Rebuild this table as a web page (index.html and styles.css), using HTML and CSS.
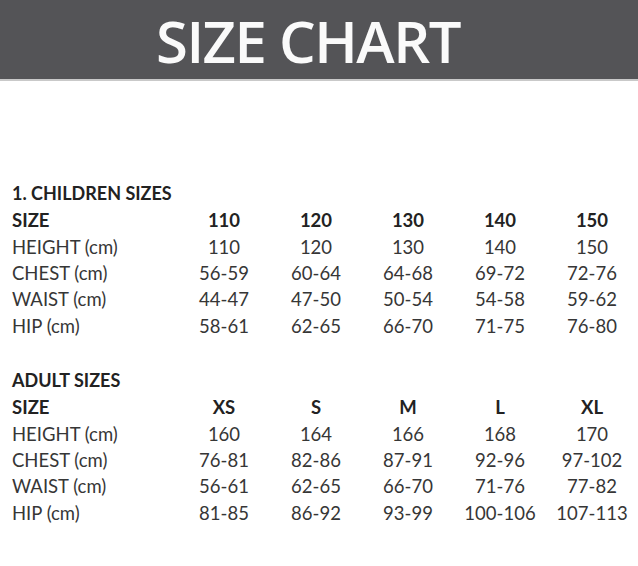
FILE: index.html
```html
<!DOCTYPE html>
<html>
<head>
<meta charset="utf-8">
<link rel="stylesheet" href="styles.css">
</head>
<body>
<header class="banner"><h1 class="title">SIZE CHART</h1></header>
<main class="content">
  <section class="chart">
    <h2 class="chart-title">1. CHILDREN SIZES</h2>
    <div class="grid">
      <div class="label head">SIZE</div><div class="cell head">110</div><div class="cell head">120</div><div class="cell head">130</div><div class="cell head">140</div><div class="cell head">150</div>
      <div class="label">HEIGHT (cm)</div><div class="cell">110</div><div class="cell">120</div><div class="cell">130</div><div class="cell">140</div><div class="cell">150</div>
      <div class="label">CHEST (cm)</div><div class="cell">56-59</div><div class="cell">60-64</div><div class="cell">64-68</div><div class="cell">69-72</div><div class="cell">72-76</div>
      <div class="label">WAIST (cm)</div><div class="cell">44-47</div><div class="cell">47-50</div><div class="cell">50-54</div><div class="cell">54-58</div><div class="cell">59-62</div>
      <div class="label">HIP (cm)</div><div class="cell">58-61</div><div class="cell">62-65</div><div class="cell">66-70</div><div class="cell">71-75</div><div class="cell">76-80</div>
    </div>
  </section>
  <section class="chart">
    <h2 class="chart-title">ADULT SIZES</h2>
    <div class="grid">
      <div class="label head">SIZE</div><div class="cell head">XS</div><div class="cell head">S</div><div class="cell head">M</div><div class="cell head">L</div><div class="cell head">XL</div>
      <div class="label">HEIGHT (cm)</div><div class="cell">160</div><div class="cell">164</div><div class="cell">166</div><div class="cell">168</div><div class="cell">170</div>
      <div class="label">CHEST (cm)</div><div class="cell">76-81</div><div class="cell">82-86</div><div class="cell">87-91</div><div class="cell">92-96</div><div class="cell">97-102</div>
      <div class="label">WAIST (cm)</div><div class="cell">56-61</div><div class="cell">62-65</div><div class="cell">66-70</div><div class="cell">71-76</div><div class="cell">77-82</div>
      <div class="label">HIP (cm)</div><div class="cell">81-85</div><div class="cell">86-92</div><div class="cell">93-99</div><div class="cell">100-106</div><div class="cell">107-113</div>
    </div>
  </section>
</main>
</body>
</html>
```

FILE: styles.css
```css
* { box-sizing: border-box; }
html, body { margin: 0; padding: 0; background: #fff; }
body { width: 638px; height: 566px; overflow: hidden; font-family: Lato, "Open Sans", sans-serif; }

.banner {
  height: 81px;
  background: #545457;
  border-bottom: 2px solid #c9c9c9;
  display: flex;
  align-items: center;
  justify-content: center;
}
.title {
  margin: 0;
  padding-right: 22px;
  padding-top: 2px;
  font-family: "Open Sans", sans-serif;
  font-weight: 600;
  font-size: 58px;
  line-height: 1;
  letter-spacing: -1.5px;
  color: #fafafa;
}

.content {
  padding: 99px 0 0 12px;
  display: flex;
  flex-direction: column;
  gap: 28px;
}
.chart-title {
  margin: 0;
  font-size: 18px;
  font-weight: 700;
  line-height: 27px;
  color: #222;
}
.grid {
  display: grid;
  grid-template-columns: 166px repeat(5, 92px);
  grid-auto-rows: 26.4px;
  align-items: center;
  font-size: 18.5px;
  color: #363636;
}
.label { white-space: nowrap; }
.cell { text-align: center; }
.head { font-weight: 700; color: #222; }
```
